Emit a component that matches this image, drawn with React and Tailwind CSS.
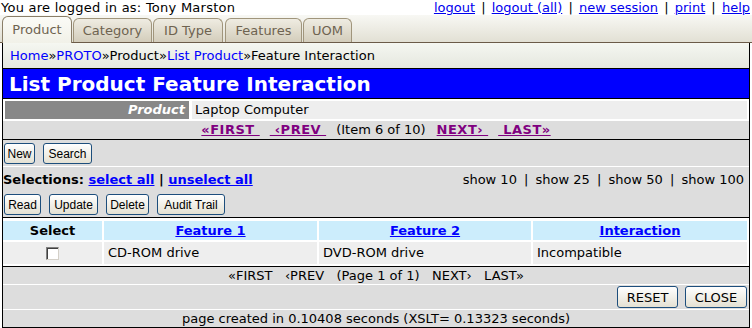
export default function App() {
    const btn =
        "h-[21px] rounded-[3px] border border-[#1d4e7c] bg-linear-to-b from-white to-[#e4e1d3] text-[12px] leading-none text-black font-['Liberation_Sans',Arial,sans-serif] flex items-center justify-center";
    const bigBtn =
        "h-[22px] rounded-[3px] border border-[#1d4e7c] bg-linear-to-b from-white to-[#e4e1d3] text-[13px] leading-none text-black flex items-center justify-center";
    const tabOff =
        "h-[24px] rounded-t-[6px] border border-b-0 border-[#a0957c] bg-linear-to-b from-[#efece2] to-[#d3cdbb] text-[#6e6350] flex items-center justify-center";
    const navLink = "text-[#800080] font-bold underline tracking-[0.5px]";
    const sep = <span className="text-black px-[3px]"> | </span>;
    const topSep = <span className="text-black px-[2px]"> | </span>;

    return (
        <div className="w-[752px] h-[328px] overflow-hidden bg-white font-['DejaVu_Sans',Verdana,sans-serif] text-[13px] text-black">
            {/* top line */}
            <div className="h-[15px] flex items-center justify-between pl-[1px] pr-[2px] leading-[15px]">
                <span className="whitespace-nowrap tracking-[0.25px]">You are logged in as: Tony Marston</span>
                <span className="text-[#0000ee] whitespace-nowrap">
                    <a className="underline">logout</a>
                    {topSep}
                    <a className="underline">logout (all)</a>
                    {topSep}
                    <a className="underline">new session</a>
                    {topSep}
                    <a className="underline">print</a>
                    {topSep}
                    <a className="underline">help</a>
                </span>
            </div>

            {/* tabs */}
            <div className="h-[28px] flex items-end pl-[2px] border-b border-[#6b5b48] bg-linear-to-b from-[#f8f8f4] to-[#e2e0d4]">
                <div className="w-[70px] h-[27px] -mb-px rounded-t-[6px] border border-b-0 border-[#8a7e68] bg-linear-to-b from-[#fbfbf7] to-[#f1f1e8] text-[#6e6350] flex items-center justify-center">
                    Product
                </div>
                <div className={`w-[79px] ml-[1px] ${tabOff}`}>Category</div>
                <div className={`w-[70px] ml-[1px] ${tabOff}`}>ID Type</div>
                <div className={`w-[77px] ml-[2px] ${tabOff}`}>Features</div>
                <div className={`w-[49px] ml-[1px] ${tabOff}`}>UOM</div>
            </div>

            {/* breadcrumb */}
            <div className="mx-[2px] h-[26px] border-x border-b border-black bg-linear-to-b from-[#f5f7f1] to-[#e5e7df] flex items-center pl-[7px]">
                <a className="text-[#0000ff]">Home</a>»
                <a className="text-[#0000ff]">PROTO</a>»Product»
                <a className="text-[#0000ff]">List Product</a>»Feature Interaction
            </div>

            {/* main box */}
            <div className="mx-[2px] border-x border-b border-black">
                <div className="h-[30px] bg-[#0000ff] border-b border-black flex items-center pl-[6px] text-white font-bold text-[20px]">
                    List Product Feature Interaction
                </div>

                <div className="flex gap-[3px] px-[2px] py-[2px]">
                    <div className="w-[184px] h-[18px] bg-[#888888] text-white font-bold italic text-right pr-[4px] leading-[18px]">
                        Product
                    </div>
                    <div className="flex-1 h-[18px] bg-[#eeeeee] pl-[3px] leading-[18px]">
                        Laptop Computer
                    </div>
                </div>

                <div className="h-[19px] bg-[#dddddd] border-b border-black flex items-center justify-center whitespace-pre">
                    <a className={navLink}>«FIRST </a>
                    <a className={`ml-[10px] ${navLink}`}> ‹PREV </a>
                    <span className="ml-[10px]">(Item 6 of 10)</span>
                    <a className={`ml-[11px] ${navLink}`}>NEXT› </a>
                    <a className={`ml-[10px] ${navLink}`}> LAST»</a>
                </div>

                {/* action buttons */}
                <div className="h-[27px] bg-[#dddddd] border-b border-white flex items-start pt-[3px] pl-[1px] gap-[8px]">
                    <button className={`w-[31px] ${btn}`}>New</button>
                    <button className={`w-[49px] ${btn}`}>Search</button>
                </div>

                {/* selections */}
                <div className="bg-[#dddddd] border-b border-black">
                    <div className="h-[26px] flex items-center justify-between pr-[5px]">
                        <span className="font-bold whitespace-pre">
                            Selections: <a className="text-[#0000ff] underline">select all</a> | <a className="text-[#0000ff] underline">unselect all</a>
                        </span>
                        <span className="whitespace-pre">
                            show 10{sep}show 25{sep}show 50{sep}show 100
                        </span>
                    </div>
                    <div className="flex gap-[8px] pl-[1px] pt-[1px] pb-[2px]">
                        <button className={`w-[37px] ${btn}`}>Read</button>
                        <button className={`w-[49px] ${btn}`}>Update</button>
                        <button className={`w-[43px] ${btn}`}>Delete</button>
                        <button className={`w-[68px] ${btn}`}>Audit Trail</button>
                    </div>
                </div>

                {/* list */}
                <div className="grid grid-cols-[99px_213px_212px_214px] gap-[2px] pt-[3px] pb-[2px] border-b border-black">
                    <div className="h-[19px] bg-[#ccedfc] font-bold text-center leading-[19px]">Select</div>
                    <div className="h-[19px] bg-[#ccedfc] font-bold text-center leading-[19px] text-[#0000ff] underline">Feature 1</div>
                    <div className="h-[19px] bg-[#ccedfc] font-bold text-center leading-[19px] text-[#0000ff] underline">Feature 2</div>
                    <div className="h-[19px] bg-[#ccedfc] font-bold text-center leading-[19px] text-[#0000ff] underline">Interaction</div>

                    <div className="h-[22px] bg-[#eeeeee] flex items-center justify-center">
                        <div className="w-[13px] h-[13px] border border-t-[#808080] border-l-[#808080] border-r-[#d4d0c8] border-b-[#d4d0c8] bg-white shadow-[inset_1px_1px_0_#404040]" />
                    </div>
                    <div className="h-[22px] bg-[#eeeeee] pl-[4px] leading-[22px]">CD-ROM drive</div>
                    <div className="h-[22px] bg-[#eeeeee] pl-[4px] leading-[22px]">DVD-ROM drive</div>
                    <div className="h-[22px] bg-[#eeeeee] pl-[4px] leading-[22px]">Incompatible</div>
                </div>

                <div className="h-[18px] bg-[#dddddd] border-b border-white flex items-center justify-center whitespace-pre">
                    «FIRST   ‹PREV   (Page 1 of 1)   NEXT›   LAST»
                </div>

                <div className="h-[25px] bg-[#dddddd] border-b border-white flex justify-end items-start pt-[1px] pr-[2px] gap-[7px]">
                    <button className={`w-[61px] ${bigBtn}`}>RESET</button>
                    <button className={`w-[62px] ${bigBtn}`}>CLOSE</button>
                </div>

                <div className="h-[17px] bg-[#dddddd] flex items-center justify-center">
                    page created in 0.10408 seconds (XSLT= 0.13323 seconds)
                </div>
            </div>
        </div>
    );
}
